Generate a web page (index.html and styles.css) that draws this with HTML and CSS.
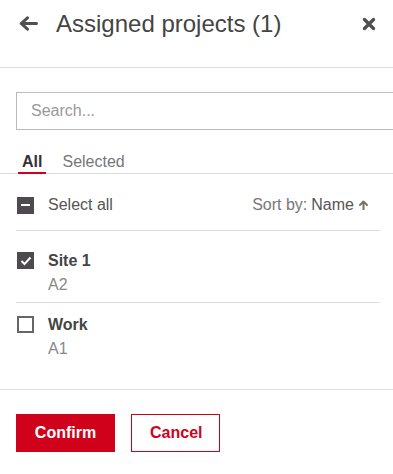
FILE: index.html
```html
<!DOCTYPE html>
<html lang="en">
<head>
    <meta charset="UTF-8">
    <meta name="viewport" content="width=device-width, initial-scale=1.0">
    <title>Assigned projects</title>
    <link rel="stylesheet" href="styles.css">
</head>
<body>
    <div class="panel">
        <header class="head">
            <button class="icon-btn back" aria-label="Back">
                <svg width="20" height="15" viewBox="0 0 20 15"><path d="M18.5 7.5H4M9.5 1.8L3.2 7.5l6.3 5.7" fill="none" stroke="#505050" stroke-width="3" stroke-linecap="round" stroke-linejoin="round"/></svg>
            </button>
            <h1 class="title">Assigned projects (1)</h1>
            <button class="icon-btn close" aria-label="Close">
                <svg width="14" height="14" viewBox="0 0 14 14"><path d="M2.5 2.5l9 9M11.5 2.5l-9 9" fill="none" stroke="#505050" stroke-width="3.4" stroke-linecap="round"/></svg>
            </button>
        </header>

        <div class="search-wrap">
            <input class="search" type="text" placeholder="Search...">
        </div>

        <nav class="tabs">
            <span class="tab active">All</span>
            <span class="tab">Selected</span>
        </nav>

        <div class="list">
            <div class="list-head">
                <label class="check-row">
                    <span class="box mixed"><span class="dash"></span></span>
                    <span class="select-all">Select all</span>
                </label>
                <div class="sort">
                    Sort by: <span class="sort-key">Name</span>
                    <svg width="9" height="10" viewBox="0 0 9 10"><path d="M4.5 9.5V2M1 5l3.5-3.5L8 5" fill="none" stroke="#7d7260" stroke-width="2" stroke-linecap="round" stroke-linejoin="round"/></svg>
                </div>
            </div>

            <ul class="items">
                <li class="item">
                    <span class="box checked">
                        <svg width="12" height="10" viewBox="0 0 12 10"><path d="M1.5 5l3 3 6-6.5" fill="none" stroke="#fff" stroke-width="2"/></svg>
                    </span>
                    <div class="item-text">
                        <div class="item-name">Site 1</div>
                        <div class="item-sub">A2</div>
                    </div>
                </li>
                <li class="item">
                    <span class="box"></span>
                    <div class="item-text">
                        <div class="item-name">Work</div>
                        <div class="item-sub">A1</div>
                    </div>
                </li>
            </ul>
        </div>

        <footer class="actions">
            <button class="btn primary">Confirm</button>
            <button class="btn outline">Cancel</button>
        </footer>
    </div>
</body>
</html>
```

FILE: styles.css
```css
body {
    margin: 0;
    font-family: 'Liberation Sans', Arial, Helvetica, sans-serif;
    color: #444;
    background: #fff;
    overflow: hidden;
}
.panel {
    width: 393px;
    height: 474px;
    overflow: hidden;
}
.head {
    display: flex;
    align-items: center;
    height: 68px;
    box-sizing: border-box;
    padding: 0 17px 20px 18px;
    border-bottom: 1px solid #ddd;
}
.icon-btn {
    display: flex;
    align-items: center;
    justify-content: center;
    padding: 0;
    border: none;
    background: none;
    cursor: pointer;
}
.title {
    flex: 1;
    margin: 0 0 0 18px;
    font-size: 24px;
    font-weight: normal;
    line-height: 28px;
    color: #444;
}
.search-wrap {
    padding: 24px 0 0 16px;
}
.search {
    display: block;
    width: 400px;
    height: 38px;
    box-sizing: border-box;
    border: 1px solid #bbb;
    padding: 0 14px;
    font-family: inherit;
    font-size: 16px;
    color: #444;
    outline: none;
}
.search::placeholder {
    color: #999;
}
.tabs {
    display: flex;
    gap: 12px;
    margin-top: 22px;
    padding-left: 18px;
    border-bottom: 1px solid #ddd;
}
.tab {
    padding: 1px 4px 1px 4px;
    font-size: 16px;
    line-height: 18px;
    color: #777;
    border-bottom: 2px solid transparent;
    margin-bottom: -1px;
}
.tab.active {
    color: #333;
    font-weight: bold;
    border-bottom-color: #d0021b;
}
.list {
    padding: 0 13px 0 16px;
}
.list-head {
    display: flex;
    align-items: center;
    justify-content: space-between;
    padding: 22px 0 16px 0;
    border-bottom: 1px solid #dcd9d3;
}
.check-row {
    display: flex;
    align-items: center;
}
.box {
    display: flex;
    align-items: center;
    justify-content: center;
    width: 17px;
    height: 17px;
    box-sizing: border-box;
    margin-left: 1px;
    border: 2px solid #666;
    background: #fff;
    flex-shrink: 0;
}
.box.mixed, .box.checked {
    background: #4d4b4d;
    border-color: #4d4b4d;
}
.dash {
    width: 9px;
    height: 2px;
    background: #fff;
}
.select-all {
    margin-left: 14px;
    font-size: 16px;
    line-height: 18px;
    color: #555;
}
.sort {
    display: flex;
    align-items: center;
    margin-right: 12px;
    font-size: 16px;
    color: #777;
}
.sort-key {
    color: #555;
    margin-left: 4px;
    margin-right: 5px;
}
.items {
    list-style: none;
    margin: 0;
    padding: 8px 0 23px 0;
}
.item {
    display: flex;
    align-items: flex-start;
    padding: 13px 0 8px 0;
}
.item + .item {
    border-top: 1px solid #ddd;
}
.item-text {
    margin-left: 14px;
}
.item-name {
    font-size: 16px;
    line-height: 18px;
    font-weight: bold;
    color: #444;
}
.item-sub {
    margin-top: 6px;
    font-size: 16px;
    line-height: 18px;
    color: #888;
}
.actions {
    display: flex;
    gap: 16px;
    padding: 24px 16px;
    border-top: 1px solid #e2e2e2;
}
.btn {
    height: 38px;
    padding: 0 18px;
    font-family: inherit;
    font-size: 16px;
    font-weight: bold;
    cursor: pointer;
}
.btn.primary {
    width: 99px;
    background: #d0021b;
    color: #fff;
    border: none;
}
.btn.outline {
    width: 89px;
    background: #fff;
    color: #d0021b;
    border: 1px solid #d0021b;
}
```
